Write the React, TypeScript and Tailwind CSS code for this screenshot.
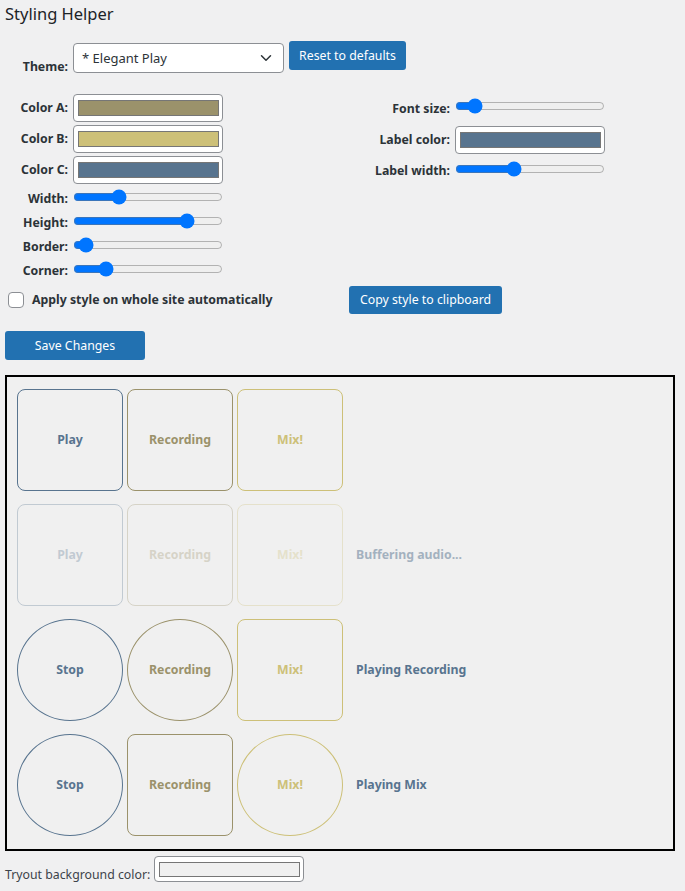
import { ChevronDown } from 'lucide-react';

const colorA = '#9b926b';
const colorB = '#cdc078';
const colorC = '#58748f';

function Swatch({ color, className = '' }: { color: string; className?: string }) {
  return (
    <div className={`flex h-[28px] w-[150px] items-center rounded-[4px] border border-[#8c8f94] bg-white pl-[4px] pr-[3px] ${className}`}>
      <div className="h-[16px] w-full border border-[#767676]" style={{ backgroundColor: color }} />
    </div>
  );
}

function Slider({ value }: { value: number }) {
  return <input type="range" min={0} max={100} defaultValue={value} className="mb-[5px] h-[16px] w-[150px] accent-[#0075ff]" />;
}

function Row({ label, labelWidth, className = '', children }: { label: string; labelWidth: string; className?: string; children: React.ReactNode }) {
  return (
    <div className={`flex items-center gap-[5px] ${className}`}>
      <span className={`${labelWidth} text-right font-bold text-[#2c3338]`}>{label}</span>
      {children}
    </div>
  );
}

type Shape = 'sq' | 'ci';

function Tile({ text, color, shape }: { text: string; color: string; shape: Shape }) {
  return (
    <div
      className={`flex h-[102px] w-[106px] items-center justify-center border font-bold ${shape === 'ci' ? 'rounded-[50%]' : 'rounded-[8px]'}`}
      style={{ borderColor: color, color }}
    >
      {text}
    </div>
  );
}

const rows: { shapes: [Shape, Shape, Shape]; first: string; label: string; faded?: boolean }[] = [
  { shapes: ['sq', 'sq', 'sq'], first: 'Play', label: '' },
  { shapes: ['sq', 'sq', 'sq'], first: 'Play', label: 'Buffering audio...', faded: true },
  { shapes: ['ci', 'ci', 'sq'], first: 'Stop', label: 'Playing Recording' },
  { shapes: ['ci', 'sq', 'ci'], first: 'Stop', label: 'Playing Mix' },
];

export default function App() {
  return (
    <div className="min-h-[891px] bg-[#f0f0f1] font-['Noto_Sans',sans-serif] text-[12.3px] leading-[18px] text-[#2c3338]">
      <h1 className="pl-[5px] pt-[3px] text-[16.5px] leading-[22px] text-[#1d2327]">Styling Helper</h1>

      <div className="mt-[16px] flex items-start">
        <span className="w-[68px] translate-y-[3px] self-end text-right font-bold">Theme:</span>
        <div className="ml-[5px] mt-[2px] flex h-[30px] w-[211px] items-center justify-between rounded-[4px] border border-[#8c8f94] bg-white pl-[8px] pr-[8px] text-[13px]">
          <span>* Elegant Play</span>
          <ChevronDown size={18} strokeWidth={2} className="text-[#2c3338]" />
        </div>
        <button className="ml-[5px] h-[29px] w-[117px] rounded-[3px] bg-[#2271b1] text-white">Reset to defaults</button>
      </div>

      <div className="mt-[21px] flex">
        <div className="flex w-[340px] flex-col">
          <Row label="Color A:" labelWidth="w-[68px]">
            <Swatch color={colorA} />
          </Row>
          <Row label="Color B:" labelWidth="w-[68px]" className="mt-[3px]">
            <Swatch color={colorB} />
          </Row>
          <Row label="Color C:" labelWidth="w-[68px]" className="mt-[3px]">
            <Swatch color={colorC} />
          </Row>
          <div className="mt-[3px] flex flex-col">
            {[
              ['Width:', 28],
              ['Height:', 79],
              ['Border:', 4],
              ['Corner:', 19],
            ].map(([l, v]) => (
              <Row key={l as string} label={l as string} labelWidth="w-[68px]" className="h-[24px]">
                <Slider value={v as number} />
              </Row>
            ))}
          </div>
        </div>
        <div className="flex flex-col">
          <Row label="Font size:" labelWidth="w-[110px]" className="h-[29px]">
            <Slider value={9} />
          </Row>
          <Row label="Label color:" labelWidth="w-[110px]" className="mt-[3px]">
            <Swatch color={colorC} />
          </Row>
          <Row label="Label width:" labelWidth="w-[110px]" className="mt-[3px] h-[28px]">
            <Slider value={38} />
          </Row>
        </div>
      </div>

      <div className="mt-[3px] flex h-[28px] items-center">
        <div className="flex w-[349px] items-center gap-[8px] pl-[8px]">
          <span className="h-[16px] w-[16px] rounded-[4px] border border-[#8c8f94] bg-white" />
          <span className="font-bold">Apply style on whole site automatically</span>
        </div>
        <button className="h-[28px] w-[153px] rounded-[3px] bg-[#2271b1] text-white">Copy style to clipboard</button>
      </div>

      <button className="ml-[5px] mt-[17px] h-[29px] w-[140px] rounded-[3px] bg-[#2271b1] text-white">Save Changes</button>

      <div className="mx-[5px] mt-[15px] flex h-[476px] w-[670px] flex-col gap-[13px] border-2 border-black bg-[#f0f0f0] pl-[10px] pt-[12px]">
        {rows.map((r, i) => (
          <div key={i} className="flex items-center gap-[4px]">
            <div className={`flex gap-[4px] ${r.faded ? 'opacity-30' : ''}`}>
              <Tile text={r.first} color={colorC} shape={r.shapes[0]} />
              <Tile text="Recording" color={colorA} shape={r.shapes[1]} />
              <Tile text="Mix!" color={colorB} shape={r.shapes[2]} />
            </div>
            <span className={`ml-[9px] font-bold text-[#58748f] ${r.faded ? 'opacity-50' : ''}`}>{r.label}</span>
          </div>
        ))}
      </div>

      <div className="mt-[5px] flex items-end gap-[4px] pl-[5px]">
        <span className="translate-y-[2px] text-[#3c434a]">Tryout background color:</span>
        <div className="flex h-[26px] w-[150px] items-center rounded-[4px] border border-[#8c8f94] bg-white pl-[4px] pr-[3px]">
          <div className="h-[15px] w-full border border-[#767676] bg-[#f0f0f0]" />
        </div>
      </div>
    </div>
  );
}
